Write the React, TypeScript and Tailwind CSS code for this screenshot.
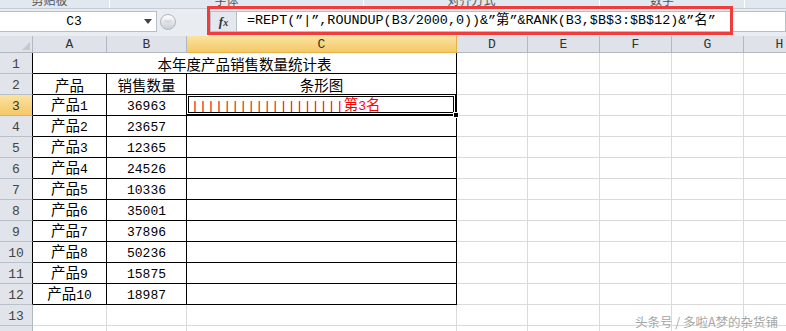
import React from 'react';

const MONO = "font-['Liberation_Mono','Noto_Sans_CJK_SC',monospace]";
const CJK = "font-['Noto_Sans_CJK_SC','Liberation_Sans',sans-serif]";

const products: [string, string][] = [
  ['产品1', '36963'],
  ['产品2', '23657'],
  ['产品3', '12365'],
  ['产品4', '24526'],
  ['产品5', '10336'],
  ['产品6', '35001'],
  ['产品7', '37896'],
  ['产品8', '50236'],
  ['产品9', '15875'],
  ['产品10', '18987'],
];

const extraCols = [71, 72, 72, 72, 72];
const headerLetters = ['D', 'E', 'F', 'G', 'H'];

// mixed text: latin/digits in a mono face, chinese in CJK face, on one baseline
const Txt: React.FC<{ s: string }> = ({ s }) => (
  <span className="whitespace-nowrap leading-[18px]">
    {s.split(/([0-9A-Za-z|]+)/).map((part, i) =>
      /^[0-9A-Za-z|]+$/.test(part) ? (
        <span key={i} className={`${MONO} text-[13px]`}>{part}</span>
      ) : part ? (
        <span key={i} className={`${CJK} text-[14.5px]`}>{part}</span>
      ) : null
    )}
  </span>
);

const RowHead: React.FC<{ n: number; active?: boolean; table?: boolean }> = ({ n, active, table }) => (
  <div
    className={`w-[33px] shrink-0 h-full flex items-center justify-center pt-[2px] border-b border-r ${MONO} text-[13px] leading-none ${
      active
        ? 'bg-gradient-to-b from-[#fbe3a0] to-[#f4c865] border-b-[#e8b04a] text-[#333]'
        : 'bg-[#e1e5eb] border-b-[#b9c0c9] text-[#444]'
    } ${table ? 'border-r-black' : 'border-r-[#b1b8c1]'}`}
  >
    {n}
  </div>
);

const Blank: React.FC = () => (
  <>
    {extraCols.map((w, i) => (
      <div key={i} style={{ width: w }} className="shrink-0 h-full border-r border-b border-[#dadada]" />
    ))}
  </>
);

const Ribbon: React.FC = () => (
  <div className="h-[9px] flex bg-[#e2e8f0] border-b border-[#c5ccd6] overflow-hidden text-[#555]">
    <div className="w-[110px] border-r border-white flex justify-center">
      <span className={`${CJK} text-[12px] leading-[12px] -mt-[6px] ml-[-10px]`}>剪贴板</span>
    </div>
    <div className="w-[254px] border-r border-white flex justify-center">
      <span className={`${CJK} text-[12px] leading-[12px] -mt-[6px] ml-[-20px]`}>字体</span>
    </div>
    <div className="w-[236px] border-r border-white flex justify-center">
      <span className={`${CJK} text-[12px] leading-[12px] -mt-[6px] ml-[-20px]`}>对齐方式</span>
    </div>
    <div className="w-[145px] border-r border-white flex justify-center">
      <span className={`${CJK} text-[12px] leading-[12px] -mt-[6px] ml-[-20px]`}>数字</span>
    </div>
    <div className="flex-1" />
  </div>
);

const FormulaBar: React.FC = () => (
  <div className="relative h-[27px] bg-[#e9edf2] flex items-center pt-[1px] pb-[3px]">
    <div className="w-[157px] h-[21px] bg-white border border-[#b6bec8] border-l-0 flex items-center">
      <span className={`${MONO} text-[13px] text-black flex-1 text-center pl-[4px]`}>C3</span>
      <svg width="8" height="5" viewBox="0 0 8 5" className="mr-[4px]">
        <path d="M0 0 L8 0 L4 5 Z" fill="#444" />
      </svg>
    </div>
    <div className="ml-[3px] w-[16px] h-[16px] rounded-full bg-gradient-to-b from-[#ffffff] to-[#c9ced5] border border-[#b0b6be] flex items-center justify-center">
      <div className="w-[8px] h-[3px] rounded-sm bg-[#d8dce1]" />
    </div>
    <div className="w-[34px]" />
    <div className="w-[27px] h-[21px] bg-[#e4e8ee] border border-[#b6bec8] flex items-center justify-center">
      <span className="font-['Liberation_Serif',serif] italic font-bold text-[13px] text-[#333]">
        f<span className="text-[10px]">x</span>
      </span>
    </div>
    <div className="flex-1 h-[21px] bg-white border border-[#b6bec8] border-l-0 flex items-center pl-[10px]">
      <span className={`${MONO} text-[13.4px] text-black whitespace-pre`}>
        =REPT(”|”,ROUNDUP(B3/2000,0))&amp;”第”&amp;RANK(B3,$B$3:$B$12)&amp;”名”
      </span>
    </div>
    {/* annotation box */}
    <div className="absolute left-[207px] top-[-3px] w-[526px] h-[29px] border-[3px] border-[#f23b3b]" />
  </div>
);

const ColHeaders: React.FC = () => (
  <div className={`h-[17px] flex ${MONO} text-[13px] leading-none text-[#333]`}>
    <div className="w-[33px] shrink-0 bg-[#dfe3e9] border-r border-b border-[#b1b8c1] relative">
      <svg width="8" height="8" className="absolute right-[2px] bottom-[2px]">
        <path d="M8 0 L8 8 L0 8 Z" fill="#c3c9d1" />
      </svg>
    </div>
    <div className="w-[74px] shrink-0 bg-[#dfe3e9] border-r border-b border-[#b1b8c1] flex items-center justify-center">A</div>
    <div className="w-[80px] shrink-0 bg-[#dfe3e9] border-r border-b border-[#b1b8c1] flex items-center justify-center">B</div>
    <div className="w-[270px] shrink-0 bg-gradient-to-b from-[#fbe3a0] to-[#f4c865] border-r border-b border-[#e8b04a] flex items-center justify-center">C</div>
    {extraCols.map((w, i) => (
      <div key={i} style={{ width: w }} className="shrink-0 bg-[#dfe3e9] border-r border-b border-[#b1b8c1] flex items-center justify-center">
        {headerLetters[i]}
      </div>
    ))}
  </div>
);

const cellCls = 'shrink-0 h-full border-r border-b border-black flex items-center justify-center pt-[1px] text-black';

export default function App() {
  return (
    <div className="w-[786px] h-[331px] bg-white overflow-hidden relative">
      <Ribbon />
      <FormulaBar />
      <ColHeaders />

      {/* row 1: merged title */}
      <div className="h-[21px] flex">
        <RowHead n={1} table />
        <div className={`w-[424px] ${cellCls}`}>
          <Txt s="本年度产品销售数量统计表" />
        </div>
        <Blank />
      </div>

      {/* row 2: headings */}
      <div className="h-[21px] flex">
        <RowHead n={2} table />
        <div className={`w-[74px] ${cellCls}`}><Txt s="产品" /></div>
        <div className={`w-[80px] ${cellCls}`}><Txt s="销售数量" /></div>
        <div className={`w-[270px] ${cellCls}`}><Txt s="条形图" /></div>
        <Blank />
      </div>

      {products.map(([name, qty], i) => (
        <div key={name} className="h-[21px] flex">
          <RowHead n={i + 3} active={i === 0} table />
          <div className={`w-[74px] ${cellCls}`}><Txt s={name} /></div>
          <div className={`w-[80px] ${cellCls}`}><Txt s={qty} /></div>
          {i === 0 ? (
            <div className="w-[270px] shrink-0 h-full border-r border-b border-black relative flex items-center pl-[4px] pt-[1px] text-[#ff0000]">
              <span className="whitespace-nowrap leading-[18px]">
                <span className={`${MONO} text-[13.4px]`}>|||||||||||||||||||</span>
                <span className={`${CJK} text-[14.5px]`}>第</span>
                <span className={`${MONO} text-[13px]`}>3</span>
                <span className={`${CJK} text-[14.5px]`}>名</span>
              </span>
              {/* selection frame */}
              <div className="absolute -left-[1px] -top-[1px] right-0 bottom-0 border border-black shadow-[inset_0_0_0_1px_#ffffff,inset_0_0_0_2px_#000000]" />
              <div className="absolute -right-[3px] -bottom-[3px] w-[6px] h-[6px] bg-black border border-white" />
            </div>
          ) : (
            <div className={`w-[270px] ${cellCls}`} />
          )}
          <Blank />
        </div>
      ))}

      {[13, 14].map((n) => (
        <div key={n} className="h-[21px] flex">
          <RowHead n={n} />
          <div className="w-[74px] shrink-0 h-full border-r border-b border-[#dadada]" />
          <div className="w-[80px] shrink-0 h-full border-r border-b border-[#dadada]" />
          <div className="w-[270px] shrink-0 h-full border-r border-b border-[#dadada]" />
          <Blank />
        </div>
      ))}

      {/* watermark */}
      <div className={`absolute right-[8px] bottom-[3px] ${CJK} text-[12.5px] leading-none text-[#a5a5a5] [text-shadow:0_0_1px_#ffffff]`}>
        头条号 / 多啦A梦的杂货铺
      </div>
    </div>
  );
}
